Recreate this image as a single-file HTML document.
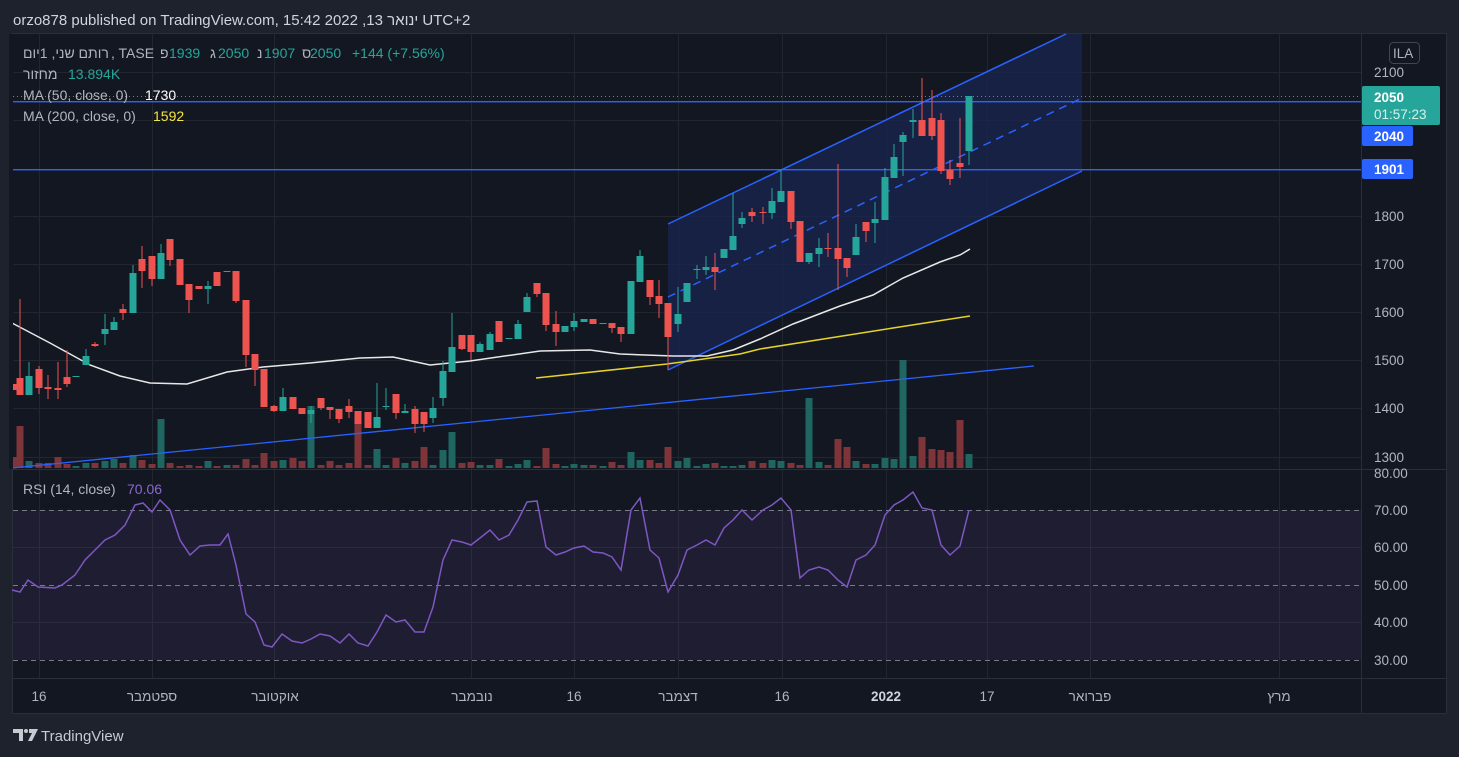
<!DOCTYPE html>
<html><head><meta charset="utf-8"><style>
html,body{margin:0;padding:0;background:#1e222d;width:1459px;height:757px;overflow:hidden}
svg{display:block}
text{font-family:"Liberation Sans","Noto Sans CJK JP",sans-serif}
</style></head><body>
<svg width="1459" height="757" viewBox="0 0 1459 757" xmlns="http://www.w3.org/2000/svg">
<rect width="1459" height="757" fill="#1e222d"/>
<text x="13" y="25" font-size="15" fill="#d1d4dc">orzo878 published on TradingView.com, 15:42 2022 ,13 <tspan>ינואר</tspan> UTC+2</text>
<rect x="12.5" y="33.5" width="1434" height="680" fill="#131722" stroke="#2a2e39"/>
<!-- grid -->
<g stroke="#22262f" stroke-width="1">
<path d="M13 72.5H1361M13 216.5H1361M13 264.5H1361M13 312.5H1361M13 360.5H1361M13 408.5H1361M13 457.5H1361M13 120.5H1361M13 547.5H1361M13 622.5H1361"/>
<path d="M39.5 34V678M152.5 34V678M274.5 34V678M471.5 34V678M574.5 34V678M678.5 34V678M782.5 34V678M886.5 34V678M987.5 34V678M1090.5 34V678M1279.5 34V678"/>
</g>
<!-- channel fill -->
<polygon points="668,224 1066,34 1082,34 1082,171 668,370" fill="#1a2550" fill-opacity="0.75"/>
<!-- volume -->
<path fill="#7e3438" d="M9.5 457h7V468h-7zM16.5 426h7V468h-7zM35.5 463h7V468h-7zM44.5 463h7V468h-7zM54.5 457h7V468h-7zM63.5 464h7V468h-7zM91.5 463h7V468h-7zM119.5 463h7V468h-7zM138.5 460h7V468h-7zM148.5 464h7V468h-7zM166.5 463h7V468h-7zM176.5 466h7V468h-7zM185.5 465h7V468h-7zM195.5 466h7V468h-7zM213.5 466h7V468h-7zM232.5 465h7V468h-7zM242.5 459h7V468h-7zM251.5 465h7V468h-7zM260.5 453h7V468h-7zM270.5 461h7V468h-7zM289.5 458h7V468h-7zM298.5 461h7V468h-7zM317.5 465h7V468h-7zM326.5 461h7V468h-7zM335.5 465h7V468h-7zM345.5 463h7V468h-7zM354.5 423h7V468h-7zM364.5 465h7V468h-7zM392.5 458h7V468h-7zM411.5 461h7V468h-7zM420.5 447h7V468h-7zM458.5 463h7V468h-7zM467.5 462h7V468h-7zM495.5 459h7V468h-7zM533.5 466h7V468h-7zM542.5 448h7V468h-7zM552.5 464h7V468h-7zM589.5 465h7V468h-7zM608.5 462h7V468h-7zM617.5 465h7V468h-7zM646.5 460h7V468h-7zM655.5 463h7V468h-7zM664.5 447h7V468h-7zM711.5 463h7V468h-7zM748.5 461h7V468h-7zM759.5 463h7V468h-7zM787.5 463h7V468h-7zM796.5 465h7V468h-7zM824.5 465h7V468h-7zM834.5 439h7V468h-7zM843.5 447h7V468h-7zM862.5 464h7V468h-7zM918.5 437h7V468h-7zM928.5 449h7V468h-7zM937.5 450h7V468h-7zM946.5 452h7V468h-7zM956.5 420h7V468h-7z"/>
<path fill="#1f6660" d="M25.5 461h7V468h-7zM72.5 466h7V468h-7zM82.5 463h7V468h-7zM101.5 461h7V468h-7zM110.5 459h7V468h-7zM129.5 455h7V468h-7zM157.5 419h7V468h-7zM204.5 461h7V468h-7zM223.5 465h7V468h-7zM279.5 460h7V468h-7zM307.5 406h7V468h-7zM373.5 449h7V468h-7zM382.5 465h7V468h-7zM401.5 463h7V468h-7zM429.5 465h7V468h-7zM439.5 450h7V468h-7zM448.5 432h7V468h-7zM476.5 465h7V468h-7zM486.5 465h7V468h-7zM505.5 466h7V468h-7zM514.5 464h7V468h-7zM523.5 460h7V468h-7zM561.5 466h7V468h-7zM570.5 464h7V468h-7zM580.5 465h7V468h-7zM599.5 466h7V468h-7zM627.5 452h7V468h-7zM636.5 460h7V468h-7zM674.5 461h7V468h-7zM683.5 458h7V468h-7zM693.5 466h7V468h-7zM702.5 464h7V468h-7zM720.5 466h7V468h-7zM729.5 466h7V468h-7zM738.5 465h7V468h-7zM768.5 460h7V468h-7zM777.5 461h7V468h-7zM805.5 398h7V468h-7zM815.5 462h7V468h-7zM852.5 461h7V468h-7zM871.5 464h7V468h-7zM881.5 458h7V468h-7zM890.5 459h7V468h-7zM899.5 360h7V468h-7zM909.5 456h7V468h-7zM965.5 454h7V468h-7z"/>
<!-- horizontal lines -->
<path d="M13 96.5H1361" stroke="#26a69a" stroke-dasharray="1 3"/>
<rect x="13" y="101" width="1348" height="1.4" fill="#2962ff"/>
<rect x="13" y="169" width="1348" height="1.4" fill="#2962ff"/>
<!-- trendline -->
<path d="M12 468L1034 366" stroke="#2962ff" stroke-width="1.3" fill="none"/>
<!-- channel lines -->
<path d="M668 370L1082 171M668 224L1066 34" stroke="#2962ff" stroke-width="1.5" fill="none"/>
<path d="M668 297L1082 98" stroke="#2962ff" stroke-width="1.5" stroke-dasharray="8 6" fill="none"/>
<!-- MAs -->
<polyline fill="none" stroke="#e8e8e8" stroke-width="1.5" points="12,323 50,343 90,365 120,376 150,383 187,384 227,372 263,367 310,363 360,358 393,357 430,365 470,361 540,351 590,350 620,354 673,356 707,356 733,350 760,339 793,324 840,306 873,295 903,278 940,262 960,255 970,249"/>
<polyline fill="none" stroke="#e5d22b" stroke-width="1.5" points="536,378 667,364 740,354 760,349 893,328 970,316"/>
<!-- wicks -->
<path stroke="#26a69a" stroke-width="1" fill="none" d="M29 362V395M86 349V365M105 314V345M114 317V330M133 265V313M161 244V279M208 281V304M283 388V411M311 406V423M377 383V428M386 388V410M405 404V413M433 397V423M443 361V406M452 313V372M480 342V352M490 332V350M518 320V339M527 293V312M574 313V331M640 250V282M678 287V332M697 265V279M706 256V275M733 193V250M742 212V228M772 188V219M781 169V202M809 253V264M819 238V267M856 224V255M875 202V243M885 168V220M894 144V178M903 132V176M913 109V138M969 96V165"/>
<path stroke="#ef5350" stroke-width="1" fill="none" d="M20 299V395M39 366V394M48 375V399M58 362V399M67 350V387M95 342V347M123 304V320M142 246V288M152 256V286M170 239V266M189 284V313M236 271V303M246 300V367M255 354V386M274 405V412M321 398V410M330 407V419M339 409V423M349 399V418M396 394V419M415 406V433M424 412V432M462 335V350M471 335V360M537 283V297M546 293V331M556 311V346M612 323V333M621 327V342M650 280V305M659 280V318M668 303V370M715 253V290M752 208V222M763 207V224M791 191V229M828 233V257M838 164V290M847 258V277M866 222V242M922 78V136M932 90V140M941 113V174M950 160V185M960 118V178"/>
<!-- bodies -->
<path fill="#26a69a" d="M25.5 376h7V395h-7zM72.5 376h7V377h-7zM82.5 356h7V365h-7zM101.5 329h7V334h-7zM110.5 322h7V330h-7zM129.5 273h7V313h-7zM157.5 253h7V279h-7zM204.5 286h7V289h-7zM223.5 271h7V272h-7zM279.5 397h7V411h-7zM307.5 410h7V414h-7zM373.5 417h7V428h-7zM382.5 406h7V407h-7zM401.5 411h7V413h-7zM429.5 408h7V418h-7zM439.5 371h7V398h-7zM448.5 347h7V372h-7zM476.5 344h7V352h-7zM486.5 334h7V350h-7zM505.5 338h7V339h-7zM514.5 324h7V339h-7zM523.5 297h7V312h-7zM561.5 326h7V332h-7zM570.5 321h7V327h-7zM580.5 319h7V322h-7zM599.5 323h7V324h-7zM627.5 281h7V334h-7zM636.5 256h7V282h-7zM674.5 314h7V324h-7zM683.5 283h7V302h-7zM693.5 269h7V270h-7zM702.5 267h7V270h-7zM720.5 249h7V258h-7zM729.5 236h7V250h-7zM738.5 218h7V224h-7zM768.5 201h7V213h-7zM777.5 191h7V202h-7zM805.5 253h7V262h-7zM815.5 248h7V254h-7zM852.5 237h7V255h-7zM871.5 219h7V223h-7zM881.5 177h7V220h-7zM890.5 157h7V178h-7zM899.5 135h7V142h-7zM909.5 120h7V122h-7zM965.5 96h7V151h-7z"/>
<path fill="#ef5350" d="M9.5 384h7V390h-7zM16.5 378h7V395h-7zM35.5 369h7V388h-7zM44.5 387h7V389h-7zM54.5 388h7V390h-7zM63.5 377h7V384h-7zM91.5 344h7V346h-7zM119.5 309h7V313h-7zM138.5 259h7V271h-7zM148.5 256h7V279h-7zM166.5 239h7V260h-7zM176.5 259h7V285h-7zM185.5 284h7V300h-7zM195.5 286h7V289h-7zM213.5 272h7V286h-7zM232.5 271h7V301h-7zM242.5 300h7V355h-7zM251.5 354h7V370h-7zM260.5 369h7V407h-7zM270.5 406h7V411h-7zM289.5 397h7V409h-7zM298.5 408h7V414h-7zM317.5 398h7V408h-7zM326.5 407h7V410h-7zM335.5 409h7V419h-7zM345.5 406h7V412h-7zM354.5 411h7V424h-7zM364.5 412h7V428h-7zM392.5 394h7V413h-7zM411.5 409h7V424h-7zM420.5 412h7V424h-7zM458.5 335h7V349h-7zM467.5 335h7V352h-7zM495.5 321h7V342h-7zM533.5 283h7V294h-7zM542.5 293h7V325h-7zM552.5 324h7V332h-7zM589.5 319h7V324h-7zM608.5 323h7V328h-7zM617.5 327h7V334h-7zM646.5 280h7V297h-7zM655.5 296h7V304h-7zM664.5 303h7V337h-7zM711.5 267h7V272h-7zM748.5 212h7V216h-7zM759.5 212h7V213h-7zM787.5 191h7V222h-7zM796.5 221h7V262h-7zM824.5 248h7V249h-7zM834.5 248h7V259h-7zM843.5 258h7V268h-7zM862.5 222h7V231h-7zM918.5 120h7V136h-7zM928.5 118h7V136h-7zM937.5 120h7V171h-7zM946.5 170h7V179h-7zM956.5 163h7V167h-7z"/>
<rect x="9" y="34" width="4" height="435" fill="#131722"/>
<!-- legend -->
<g font-size="14">
<text x="23" y="58" fill="#b2b5be">רותם שני, 1יום</text>
<text x="111" y="58" fill="#b2b5be">, TASE</text>
<text x="160" y="58" fill="#b2b5be">פ</text><text x="169" y="58" fill="#26a69a">1939</text>
<text x="210" y="58" fill="#b2b5be">ג</text><text x="218" y="58" fill="#26a69a">2050</text>
<text x="257" y="58" fill="#b2b5be">נ</text><text x="264" y="58" fill="#26a69a">1907</text>
<text x="302" y="58" fill="#b2b5be">ס</text><text x="310" y="58" fill="#26a69a">2050</text>
<text x="352" y="58" fill="#26a69a">+144 (+7.56%)</text>
<text x="23" y="79" fill="#b2b5be">מחזור</text><text x="68" y="79" fill="#26a69a">13.894K</text>
<text x="23" y="100" fill="#b2b5be">MA (50, close, 0)</text><text x="145" y="100" fill="#ffffff">1730</text>
<text x="23" y="121" fill="#b2b5be">MA (200, close, 0)</text><text x="153" y="121" fill="#f5e63c">1592</text>
<text x="23" y="494" fill="#b2b5be">RSI (14, close)</text><text x="127" y="494" fill="#8a68d0">70.06</text>
</g>
<!-- pane separators -->
<path d="M13 469.5H1446M13 678.5H1446M1361.5 34V713" stroke="#2a2e39"/>
<!-- RSI -->
<rect x="13" y="510" width="1348" height="150" fill="#7e57c2" fill-opacity="0.1"/>
<path d="M13 510.5H1361M13 585.5H1361M13 660.5H1361" stroke="#787b86" stroke-dasharray="5 4"/>
<polyline fill="none" stroke="#7e57c2" stroke-width="1.5" points="12,590 20,592 28,580 38,587 55,588 62,585 75,575 85,560 95,550 105,540 115,535 125,525 135,505 143,503 152,512 160,500 170,510 180,540 190,555 200,546 210,545 220,545 228,534 236,565 246,614 255,622 264,645 272,647 282,634 292,641 302,643 311,639 320,634 330,636 340,643 349,634 358,643 368,646 377,632 386,615 396,622 405,620 415,632 424,632 433,607 443,560 452,540 462,542 471,545 480,538 490,530 499,540 509,535 518,520 527,502 537,501 546,547 556,555 565,552 574,548 584,546 593,552 603,553 612,557 621,570 631,510 640,498 650,550 659,558 668,592 678,575 687,550 697,545 706,540 715,545 724,528 733,520 742,510 752,520 763,510 772,505 781,498 791,510 800,578 809,570 819,567 828,570 838,580 847,587 856,560 866,555 875,545 885,515 894,505 903,500 913,492 922,508 932,510 941,545 950,555 960,546 969,510"/>
<!-- price axis -->
<g font-size="13.5" fill="#b2b5be">
<rect x="1389.5" y="42.5" width="30" height="21" rx="4" fill="none" stroke="#434651"/>
<text x="1393" y="58">ILA</text>
<text x="1374" y="77">2100</text>
<text x="1374" y="221">1800</text>
<text x="1374" y="269">1700</text>
<text x="1374" y="317">1600</text>
<text x="1374" y="365">1500</text>
<text x="1374" y="413">1400</text>
<text x="1374" y="462">1300</text>
<text x="1374" y="478">80.00</text>
<text x="1374" y="515">70.00</text>
<text x="1374" y="552">60.00</text>
<text x="1374" y="590">50.00</text>
<text x="1374" y="627">40.00</text>
<text x="1374" y="665">30.00</text>
</g>
<rect x="1362" y="86" width="78" height="39" rx="2" fill="#26a69a"/>
<text x="1374" y="102" font-size="13.5" fill="#fff" font-weight="bold">2050</text>
<text x="1374" y="119" font-size="13.5" fill="#d8f0ed">01:57:23</text>
<rect x="1362" y="126" width="51" height="20" rx="2" fill="#2962ff"/>
<text x="1374" y="141" font-size="13.5" fill="#fff" font-weight="bold">2040</text>
<rect x="1362" y="159" width="51" height="20" rx="2" fill="#2962ff"/>
<text x="1374" y="174" font-size="13.5" fill="#fff" font-weight="bold">1901</text>
<!-- time axis -->
<g font-size="13.5" fill="#b2b5be" text-anchor="middle">
<text x="39" y="701">16</text>
<text x="152" y="701">ספטמבר</text>
<text x="275" y="701">אוקטובר</text>
<text x="472" y="701">נובמבר</text>
<text x="574" y="701">16</text>
<text x="678" y="701">דצמבר</text>
<text x="782" y="701">16</text>
<text x="886" y="701" font-weight="bold" fill="#d1d4dc">2022</text>
<text x="987" y="701">17</text>
<text x="1090" y="701">פברואר</text>
<text x="1279" y="701">מרץ</text>
</g>
<!-- footer logo -->
<g fill="#c8cad1">
<path d="M13 729h10v12h-4v-8h-6z"/>
<circle cx="26" cy="731" r="2"/>
<path d="M29 729h9l-6 12h-4l4-8h-3z"/>
</g>
<text x="41" y="741" font-size="15" fill="#c8cad1">TradingView</text>
</svg>
</body></html>
